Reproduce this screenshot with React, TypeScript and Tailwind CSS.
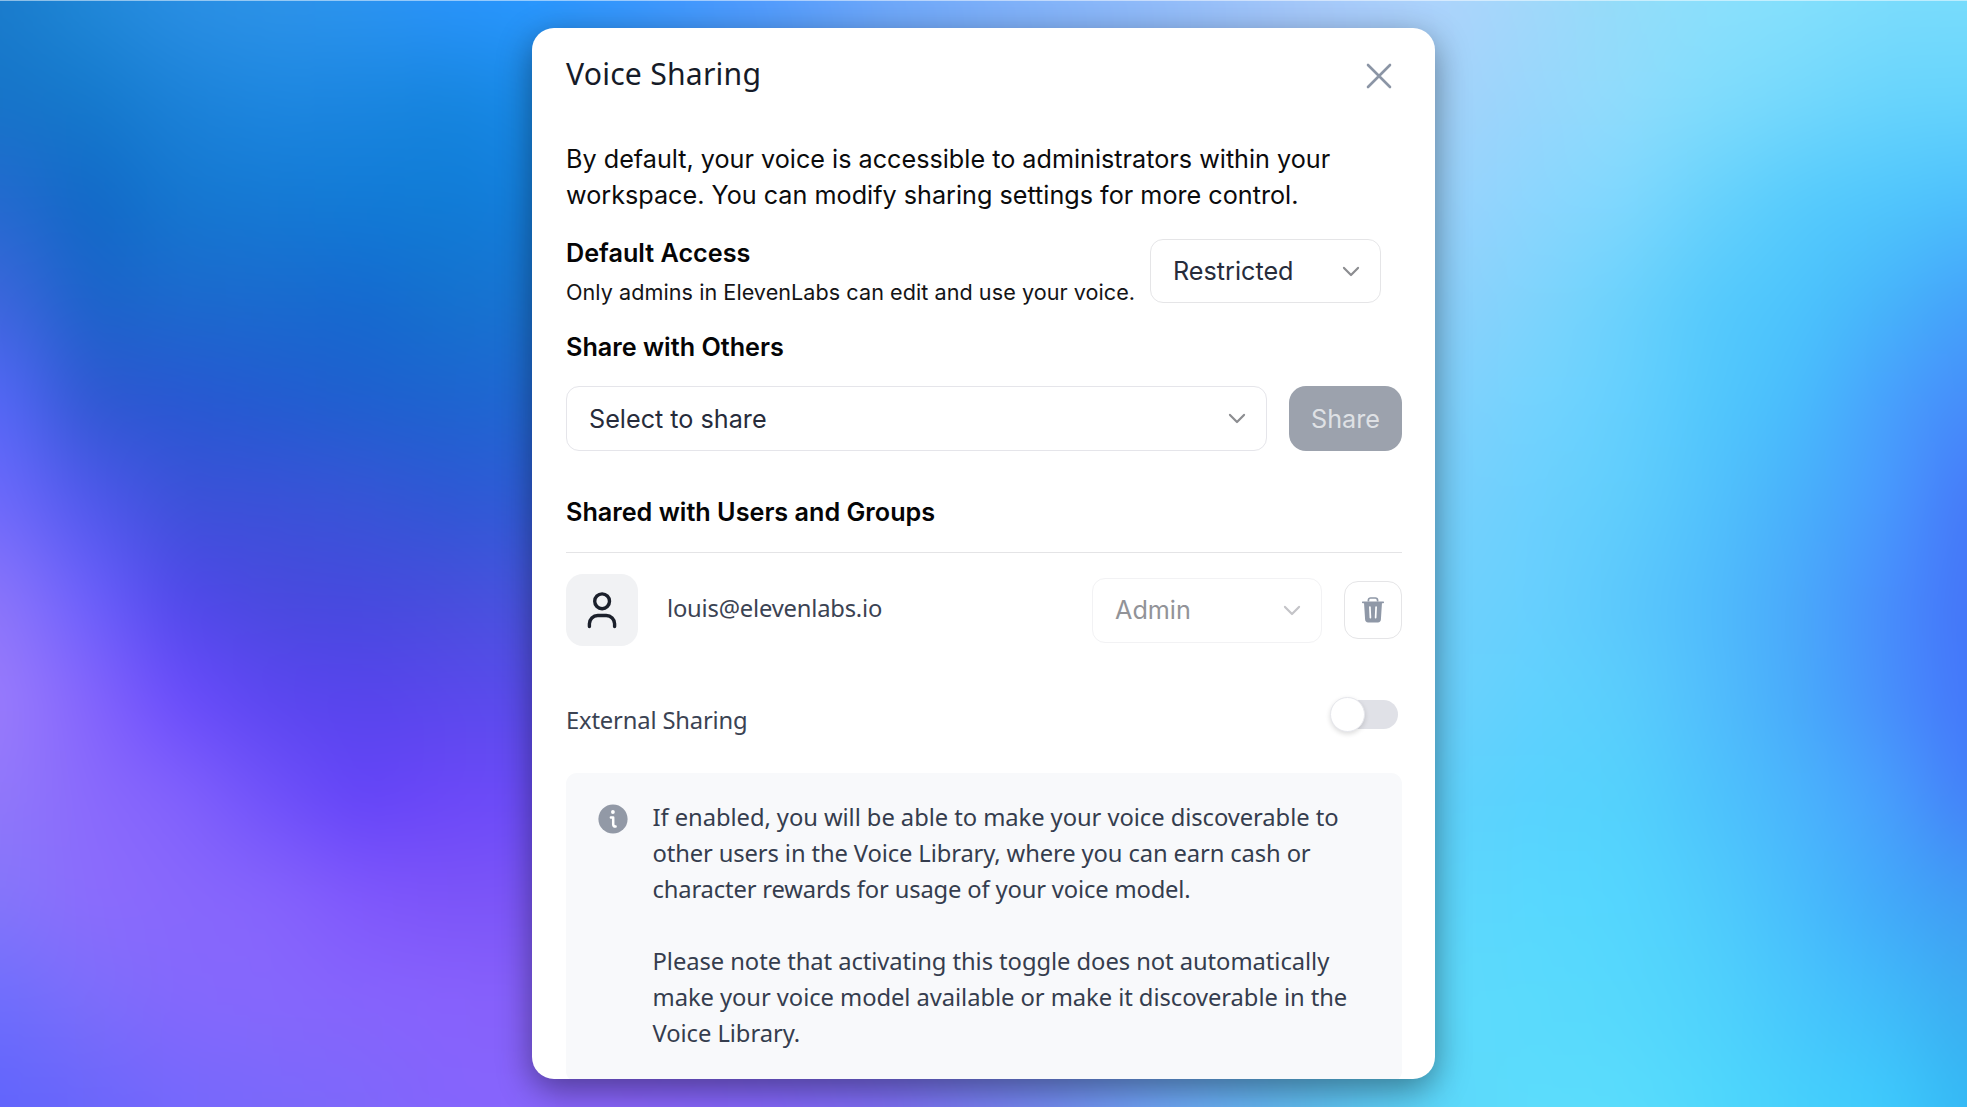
import React from "react";

// Colour samples of the wallpaper: one row per height, one colour per column.
const columns = [0, 90, 180, 270, 360, 450, 530, 640, 760, 880, 1040, 1160, 1300, 1440, 1530, 1620, 1710, 1800, 1890, 1967];
const rows: { y: number; colors: string }[] = [
  { y: 0, colors: "1a7ccc 2088d8 2a8fe4 2d93e8 2c94f0 2a94fb 2a98ff 3c98ff 529cfe 6ea8fa 84b4fa 92bcfa a6c8fa aed4fc a2d8fa 94dcf9 8ce0fc 84e0fc 7cdcfc 78dcfc" },
  { y: 100, colors: "1674c8 1579cc 1c82d8 1e87e0 1b86e0 1685de 188ae8 2a90f0 4a9afa 6aa6fa 80b2fa 90bcfa a0c8fa a4d2fa 98d6fc 90dcfc 80dcfc 74d8fc 68d4fc 66d4fc" },
  { y: 200, colors: "246acf 1169c6 1577d0 157ad4 127bd6 107cd6 147edc 2688e8 4896f4 68a6f8 7cb4fa 8cc0fa 98ccfa 9ad2fc 8cd6fe 80d8fe 68d2fc 56cbfc 50c6fc 4cc0fc" },
  { y: 300, colors: "3e66dc 1b63c9 1c6acd 1a6bce 156acf 1572ce 1874d2 267ce0 468cee 64a0f4 78b2f8 84c0fa 8cccfa 8ed0fc 80d4fc 6cd2fc 56cafc 4cc4fc 46b4fa 44a2fa" },
  { y: 400, colors: "5668f8 2f58d0 2858d2 235cd0 1f60cf 1d64cf 2068d2 2c70dc 4482e8 5c98f0 70acf6 7cbcfa 80cafc 82d0fc 74d4fe 66d0fe 52c8fc 48bcfc 489ffc 468cfa" },
  { y: 500, colors: "6e6afc 4f58ec 3c52d8 3a52d8 3755d6 2f58d4 2e5cd6 3866dc 4878e4 5890ee 68a6f4 74b8fa 78c8fc 78d0fc 6cd0fe 60cefc 52c2fc 48b0fa 4898fe 4678f8" },
  { y: 600, colors: "8c76fa 6c60fc 5048ea 4a4ade 464ade 484edc 4854de 4c60e2 5474e8 5c8cee 66a2f4 70b6fa 70c6fc 70d0fc 68d0fe 5cc8fc 50bcfc 4aa8fa 488cfc 4474f8" },
  { y: 700, colors: "9a7cfc 8465fc 6a4cfc 5b46f0 5744ec 5a48ec 5a4cec 5e5cec 6072ee 6488f0 68a0f4 6cb4fa 6cc6fc 6cd0fc 60d2fe 5acefc 52befc 48aafa 488efc 4476fa" },
  { y: 800, colors: "9078fa 8a6afc 8262fc 7052fa 6444f8 6c48f8 6c4cf8 6c5cf4 6c70f4 6888f4 68a0f6 66b4fa 62c8fc 60d2fc 58d2fe 54d2fc 4ec4fc 4ab4fc 489efc 4480f8" },
  { y: 900, colors: "8476fa 8c6cfc 8868fc 8664fc 8058fc 7c54f8 7c56f8 7a60f8 7670f6 6e88f4 68a0f6 64b6fa 60ccfc 5ed6fc 58d8fe 54d6fe 50ccfc 48bcfc 42a8fa 409cf4" },
  { y: 1000, colors: "6e6efc 7c6efa 8468fc 8668fc 8664fc 8862fc 8660fa 8660f8 8068f6 7c74f6 7094f4 68aef6 62c6fa 5edafc 5adafc 56d8fc 50d2fc 48c6fc 40bafa 3cacf0" },
  { y: 1107, colors: "6064fc 6a66fa 7568fc 7a68fa 7e68fa 8464fc 8866fc 8864fa 8466fa 7e6cf4 7488f0 70a4f6 60bcf0 5cd8fa 5cdcfc 5adcfc 50d8fc 46d0fc 3ecafc 34b8f4" },
];

// The wallpaper bleeds past the window so that its blur never shows an edge.
const BLEED = 80;

const gradient = (colors: string) =>
  "linear-gradient(to right, " +
  colors
    .split(" ")
    .map((c, i) => `#${c} ${columns[i] + BLEED}px`)
    .join(", ") +
  ")";

function Wallpaper() {
  return (
    <div className="absolute inset-0 overflow-hidden" aria-hidden>
      <div className="absolute -inset-20 flex flex-col blur-[26px]">
        <div className="h-20 shrink-0" style={{ background: gradient(rows[0].colors) }} />
        {rows.slice(0, -1).map((row, i) => (
          <div
            key={row.y}
            className="w-full shrink-0"
            style={{ height: rows[i + 1].y - row.y, background: gradient(row.colors) }}
          >
            <div
              className="size-full [mask-image:linear-gradient(to_bottom,transparent,black)]"
              style={{ background: gradient(rows[i + 1].colors) }}
            />
          </div>
        ))}
        <div className="h-20 shrink-0" style={{ background: gradient(rows[rows.length - 1].colors) }} />
      </div>
      <div className="absolute inset-x-0 top-0 h-px bg-white/50" />
    </div>
  );
}

function Chevron({ className }: { className: string }) {
  return (
    <svg viewBox="0 0 18 11" className={`h-[11px] w-[18px] ${className}`} fill="none" stroke="currentColor" strokeWidth="2.2" strokeLinecap="round" strokeLinejoin="round">
      <path d="M2 1.9 9 9l7-7.1" />
    </svg>
  );
}

function Select({ label, className, chevron = "text-[#8c8d91]" }: { label: string; className: string; chevron?: string }) {
  return (
    <button className={`flex items-center justify-between rounded-[13px] border pl-[22px] pr-[20px] text-left text-[25.2px] leading-9 ${className}`}>
      <span>{label}</span>
      <Chevron className={chevron} />
    </button>
  );
}

function CloseIcon() {
  return (
    <svg viewBox="0 0 28 28" className="size-7" fill="none" stroke="#8b95a5" strokeWidth="2.6" strokeLinecap="round">
      <path d="M3 3l22 22M25 3 3 25" />
    </svg>
  );
}

function UserIcon() {
  return (
    <svg viewBox="0 0 36 40" className="h-10 w-9" fill="none" stroke="#1b202b" strokeWidth="3.4" strokeLinecap="round">
      <circle cx="18.1" cy="11.3" r="7.4" />
      <path d="M5.4 36.6v-2.8a8.3 8.3 0 0 1 8.3-8.3h8.6a8.3 8.3 0 0 1 8.3 8.3v2.8" />
    </svg>
  );
}

function TrashIcon() {
  return (
    <svg viewBox="0 0 22 28" className="h-7 w-[22px]" fill="none">
      <path d="M6.4 5.6V4.2A2.2 2.2 0 0 1 8.6 2h4.8a2.2 2.2 0 0 1 2.2 2.2v1.4" stroke="#8f98a7" strokeWidth="1.7" />
      <path d="M.8 6.3h20.4" stroke="#8f98a7" strokeWidth="1.8" strokeLinecap="round" />
      <path d="M2 6.6h18l-1.1 17a3 3 0 0 1-3 2.8H6.1a3 3 0 0 1-3-2.8z" fill="#8f98a7" />
      <path d="M7.9 11l.5 10.6M14.1 11l-.5 10.6" stroke="white" strokeWidth="1.7" strokeLinecap="round" />
    </svg>
  );
}

function InfoIcon() {
  return (
    <svg viewBox="0 0 30 30" className="size-[30px]">
      <circle cx="15" cy="15" r="14.6" fill="#9299a6" />
      <circle cx="14.9" cy="8" r="1.9" fill="white" />
      <path d="M12.9 13.6h2.3v6.6c0 1.6.8 2.4 2.4 2.4" fill="none" stroke="white" strokeWidth="2.5" strokeLinecap="round" strokeLinejoin="round" />
    </svg>
  );
}

function Heading({ children }: { children: string }) {
  return <h2 className="text-[25.2px] font-semibold leading-9 text-[#050506]">{children}</h2>;
}

export default function App() {
  return (
    <div className="relative flex h-[1107px] w-[1967px] justify-center overflow-hidden pt-7 font-[Inter,sans-serif]">
      <Wallpaper />
      <main className="relative h-[1051px] w-[903px] overflow-hidden rounded-[22px] bg-white pl-[34px] pr-[33px] shadow-[0_10px_34px_rgba(0,0,0,0.42)]">
        <header className="flex h-[113px] items-start justify-between pr-[9px] pt-[26px]">
          <h1 className="font-['Noto_Sans',sans-serif] text-[30.2px] leading-10 tracking-[0.2px] text-[#161b28]">Voice Sharing</h1>
          <button className="mt-[8px]" aria-label="Close">
            <CloseIcon />
          </button>
        </header>

        <p className="text-[25.2px] leading-9 text-[#0b0b0c]">
          By default, your voice is accessible to administrators within your
          <br />
          workspace. You can modify sharing settings for more control.
        </p>

        <section className="mt-[22px] flex items-start justify-between pr-[21px]">
          <div>
            <Heading>Default Access</Heading>
            <p className="mt-[7px] whitespace-nowrap text-[21.6px] leading-7 tracking-[0.05px] text-[#141416]">Only admins in ElevenLabs can edit and use your voice.</p>
          </div>
          <Select label="Restricted" className="mt-1 h-16 w-[231px] border-[#e5e5e7] text-[#272c3b]" />
        </section>

        <section className="mt-[23px]">
          <Heading>Share with Others</Heading>
          <div className="mt-[21px] flex h-[65px] justify-between">
            <Select label="Select to share" className="w-[701px] border-[#e5e5ea] text-[#272c3b]" />
            <button className="w-[113px] rounded-[17px] bg-[#9ca2ad] text-[25.2px] leading-9 text-[#dfe1e5]">Share</button>
          </div>
        </section>

        <section className="mt-[43px]">
          <Heading>Shared with Users and Groups</Heading>
          <div className="mt-[22px] flex items-center border-t border-[#e4e4e6] pt-[21px]">
            <div className="flex size-[72px] items-center justify-center rounded-[17px] bg-[#f1f2f4]">
              <UserIcon />
            </div>
            <span className="-mt-[4px] ml-[29px] font-['Noto_Sans',sans-serif] text-[23.75px] leading-9 tracking-[-0.2px] text-[#3b4353]">louis@elevenlabs.io</span>
            <Select label="Admin" className="ml-auto h-[65px] w-[230px] border-[#f2f2f4] text-[#929398]" chevron="text-[#c4c4c8]" />
            <button className="ml-[22px] flex size-[58px] items-center justify-center rounded-[14px] border border-[#e5e5e7]" aria-label="Remove">
              <TrashIcon />
            </button>
          </div>
        </section>

        <section className="mt-[51px] flex h-10 items-start justify-between pr-1">
          <span className="mt-[5px] font-['Noto_Sans',sans-serif] text-[23.75px] leading-9 tracking-[-0.16px] text-[#3b4353]">External Sharing</span>
          <button className="mt-[3px] flex h-[29px] w-[66px] items-center rounded-full bg-[#e0e1e7]" aria-label="Toggle external sharing">
            <span className="-ml-[2px] size-[35px] shrink-0 rounded-full border border-[#e6e7ec] bg-white shadow-[0_2px_5px_rgba(0,0,0,0.14)]" />
          </button>
        </section>

        <section className="mt-9 flex h-[309px] rounded-[11px] bg-[#f8f9fb] pl-8 pt-[26px]">
          <div className="mt-[5px]">
            <InfoIcon />
          </div>
          <div className="ml-[24.5px] whitespace-nowrap font-['Noto_Sans',sans-serif] text-[23.75px] leading-9 tracking-[-0.06px] text-[#353d4e]">
            <p>
              If enabled, you will be able to make your voice discoverable to
              <br />
              <span className="tracking-[-0.12px]">other users in the Voice Library, where you can earn cash or</span>
              <br />
              <span className="tracking-[-0.16px]">character rewards for usage of your voice model.</span>
            </p>
            <p className="mt-9">
              Please note that activating this toggle does not automatically
              <br />
              make your voice model available or make it discoverable in the
              <br />
              Voice Library.
            </p>
          </div>
        </section>
      </main>
    </div>
  );
}
